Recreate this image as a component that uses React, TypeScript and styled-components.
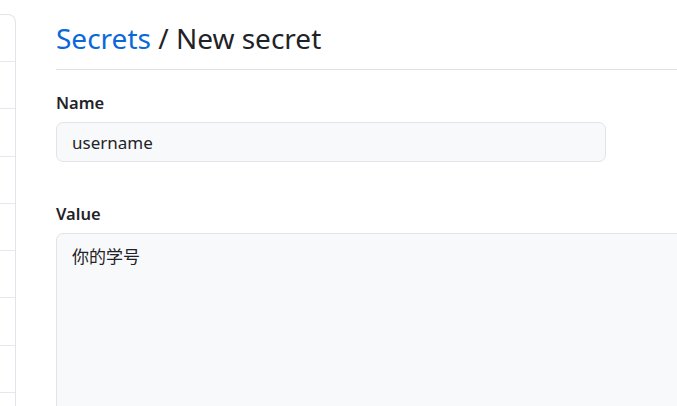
import styled, { createGlobalStyle } from 'styled-components';

const GlobalStyle = createGlobalStyle`
  html, body {
    margin: 0;
    padding: 0;
    overflow: hidden;
    background: #ffffff;
  }
  body {
    font-family: 'Noto Sans', 'Noto Sans CJK SC', sans-serif;
    color: #1f2328;
  }
`;

const Page = styled.div`
  display: flex;
  align-items: flex-start;
  gap: 40px;
  width: 677px;
  height: 406px;
  overflow: hidden;
`;

const SideNav = styled.nav`
  flex: 0 0 15px;
  margin-top: 14px;
  display: flex;
  flex-direction: column;
  border: 1px solid #e1e4e8;
  border-left: none;
  border-top-right-radius: 8px;
`;

const NavItem = styled.div`
  height: 46.3px;
  border-top: 1px solid #e6e9ec;

  &:first-child {
    height: 46px;
    border-top: none;
  }
`;

const Content = styled.main`
  flex: 1;
  min-width: 0;
`;

const Subhead = styled.header`
  padding: 16px 0 8px;
  border-bottom: 1px solid #dfe2e5;
`;

const Heading = styled.h1`
  margin: 0;
  font-size: 28px;
  font-weight: 400;
  line-height: 45px;
  color: #1f2328;
`;

const Crumb = styled.a`
  color: #0969da;
  text-decoration: none;
`;

const FormGroup = styled.div<{ $top: number }>`
  margin-top: ${(p) => p.$top}px;
`;

const Label = styled.label`
  display: block;
  margin-bottom: 6px;
  font-size: 16.5px;
  font-weight: 600;
  line-height: 26px;
`;

const TextInput = styled.input`
  box-sizing: border-box;
  width: 550px;
  height: 40px;
  padding: 0 15px;
  font-family: inherit;
  font-size: 17px;
  color: #1f2328;
  background: #f8f9fb;
  border: 1px solid #e1e4e8;
  border-radius: 7px;
  outline: none;
`;

const TextArea = styled.textarea`
  box-sizing: border-box;
  display: block;
  width: 700px;
  height: 220px;
  padding: 10px 15px;
  font-family: 'Noto Sans', 'Noto Sans CJK SC', sans-serif;
  font-size: 17px;
  line-height: 26px;
  color: #1f2328;
  background: #f8f9fb;
  border: 1px solid #e1e4e8;
  border-radius: 7px;
  outline: none;
  resize: none;
`;

export default function App() {
  return (
    <>
      <GlobalStyle />
      <Page>
        <SideNav>
          {Array.from({ length: 9 }).map((_, i) => (
            <NavItem key={i} />
          ))}
        </SideNav>
        <Content>
          <Subhead>
            <Heading>
              <Crumb href="#">Secrets</Crumb> / New secret
            </Heading>
          </Subhead>
          <FormGroup $top={20}>
            <Label htmlFor="secret-name">Name</Label>
            <TextInput id="secret-name" defaultValue="username" />
          </FormGroup>
          <FormGroup $top={39}>
            <Label htmlFor="secret-value">Value</Label>
            <TextArea id="secret-value" defaultValue="你的学号" />
          </FormGroup>
        </Content>
      </Page>
    </>
  );
}
